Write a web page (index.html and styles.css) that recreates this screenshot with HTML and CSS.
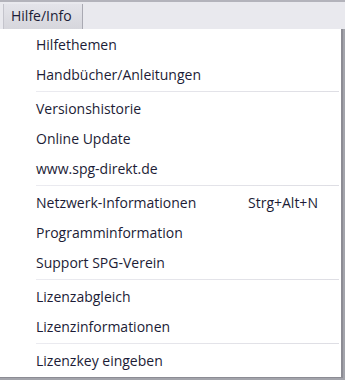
FILE: index.html
```html
<!DOCTYPE html>
<html>
<head>
    <title>Hilfe/Info</title>
    <link rel="stylesheet" href="styles.css">
</head>
<body>
    <div class="menubar">
        <div class="menutitle">Hilfe/Info</div>
    </div>
    <div class="dropdown">
        <div class="item">Hilfethemen</div>
        <div class="item">Handbücher/Anleitungen</div>
        <div class="sep"></div>
        <div class="item">Versionshistorie</div>
        <div class="item">Online Update</div>
        <div class="item">www.spg-direkt.de</div>
        <div class="sep"></div>
        <div class="item"><span class="label">Netzwerk-Informationen</span><span class="shortcut">Strg+Alt+N</span></div>
        <div class="item">Programminformation</div>
        <div class="item">Support SPG-Verein</div>
        <div class="sep"></div>
        <div class="item">Lizenzabgleich</div>
        <div class="item">Lizenzinformationen</div>
        <div class="sep"></div>
        <div class="item">Lizenzkey eingeben</div>
    </div>
</body>
</html>
```

FILE: styles.css
```css
body {
    margin: 0;
    width: 345px;
    height: 380px;
    overflow: hidden;
    background-color: #a3a4ab;
    font-family: "Open Sans", "Noto Sans", sans-serif;
    font-size: 14px;
    color: #1c1c36;
    display: flex;
    flex-direction: column;
}

.menubar {
    height: 27px;
    background-color: #e9e9ee;
    border-top: 2px solid #b3b3bb;
    display: flex;
    padding-left: 3px;
}

.menutitle {
    width: 67px;
    margin-top: 2px;
    padding-left: 7px;
    padding-right: 4px;
    line-height: 23px;
    background: linear-gradient(#e4e4ea, #d6d6dc);
    border-left: 1px solid #c4c4cc;
    border-right: 1px solid #a9a9b2;
}

.dropdown {
    width: 341px;
    height: 347px;
    background-color: #fff;
    border-right: 2px solid #8c8c94;
    border-bottom: 1px solid #8c8c94;
    padding-top: 1px;
    display: flex;
    flex-direction: column;
}

.item {
    height: 30px;
    line-height: 30px;
    padding-left: 36px;
    display: flex;
}

.label {
    width: 212px;
}

.sep {
    height: 1px;
    margin: 1px 2px 2px 36px;
    background: linear-gradient(to right, #ebebf0, #dedee4);
}
```
